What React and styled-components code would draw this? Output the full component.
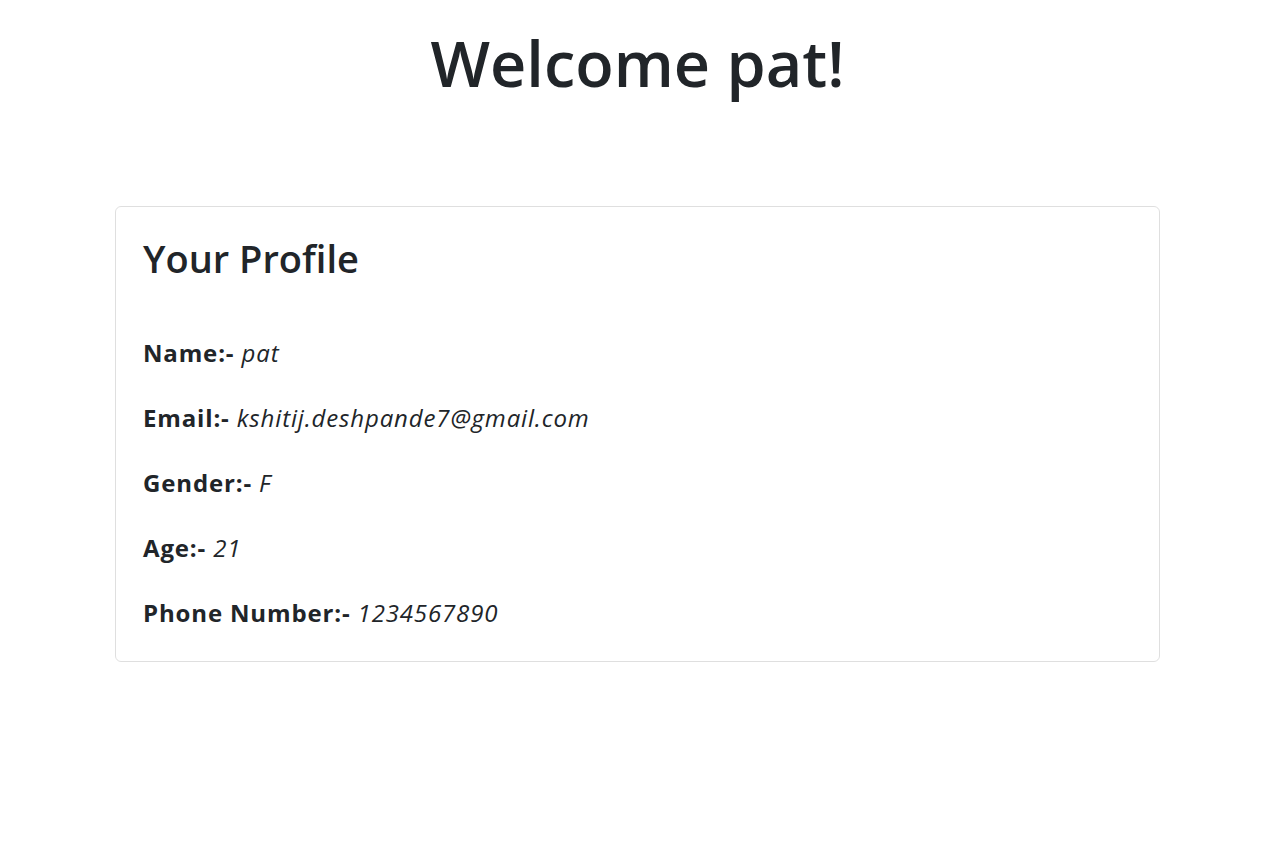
import styled, { createGlobalStyle } from 'styled-components'

const GlobalStyle = createGlobalStyle`
  body {
    margin: 0;
    background: #fff;
    color: #212529;
    font-family: "Open Sans", "Noto Sans", sans-serif;
  }
`

const Page = styled.div`
  display: flex;
  flex-direction: column;
  align-items: center;
  padding: 25px 120px 0 115px;
`

const Title = styled.h1`
  margin: 0;
  font-size: 63px;
  font-weight: 600;
  line-height: 1.2;
  text-align: center;
`

const Card = styled.section`
  align-self: stretch;
  margin-top: 105px;
  border: 1px solid rgba(0, 0, 0, 0.125);
  border-radius: 6px;
  padding: 29px 27px 16px;
`

const CardTitle = styled.h2`
  margin: 0 0 39px;
  font-size: 38px;
  font-weight: 600;
  line-height: 1.2;
`

const Field = styled.p`
  margin: 0;
  font-size: 24px;
  line-height: 65px;
  letter-spacing: 0.85px;
`

const Label = styled.strong`
  font-weight: 700;
`

const Value = styled.em`
  font-style: italic;
`

const profile = [
  ['Name', 'pat'],
  ['Email', 'kshitij.deshpande7@gmail.com'],
  ['Gender', 'F'],
  ['Age', '21'],
  ['Phone Number', '1234567890'],
]

export default function App() {
  return (
    <>
      <GlobalStyle />
      <Page>
        <Title>Welcome pat!</Title>
        <Card>
          <CardTitle>Your Profile</CardTitle>
          {profile.map(([label, value]) => (
            <Field key={label}>
              <Label>{label}:-</Label> <Value>{value}</Value>
            </Field>
          ))}
        </Card>
      </Page>
    </>
  )
}
